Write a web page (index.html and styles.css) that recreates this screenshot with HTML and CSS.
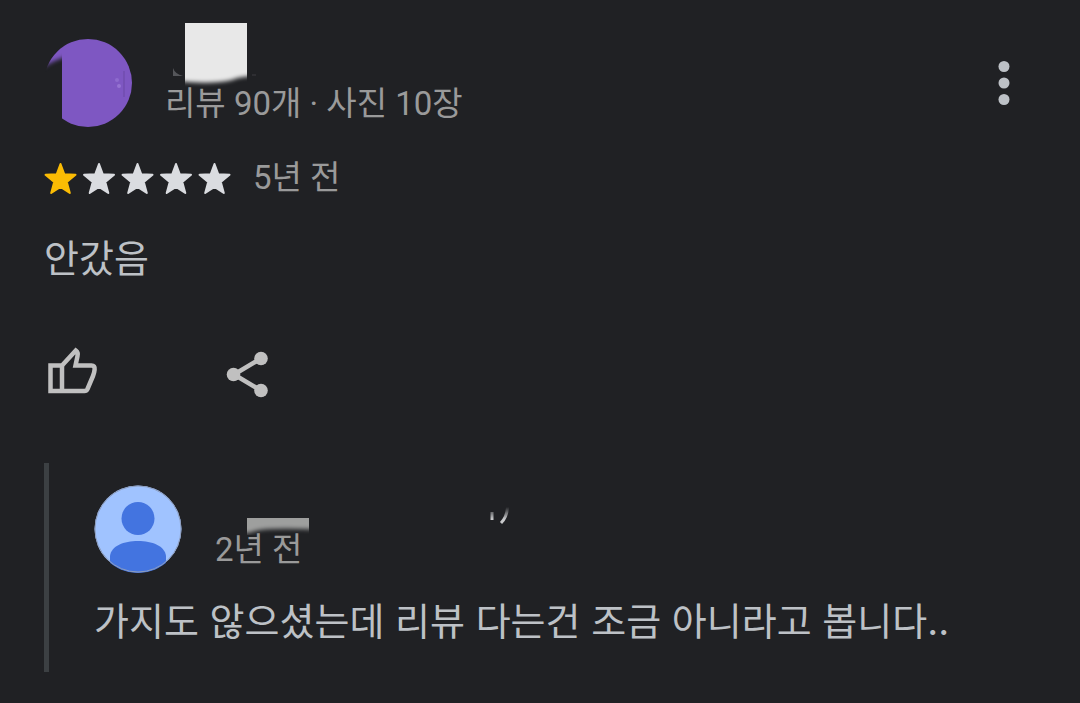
FILE: index.html
```html
<!DOCTYPE html>
<html lang="ko">
<head>
    <meta charset="UTF-8">
    <meta name="viewport" content="width=device-width, initial-scale=1.0">
    <title>리뷰</title>
    <link rel="stylesheet" href="styles.css">
</head>
<body>
    <article class="review">
        <header class="review-header">
            <svg class="avatar" viewBox="0 0 88 88" aria-hidden="true">
                <defs>
                    <filter id="soft" x="-20%" y="-20%" width="140%" height="140%"><feGaussianBlur stdDeviation="2"/></filter>
                    <clipPath id="circle"><circle cx="44" cy="44" r="44"/></clipPath>
                    <mask id="cut">
                        <path d="M0 0H88V88H0Z" fill="#fff"/>
                        <path d="M-10 34Q8 21 30 15V110H-10Z" fill="#000" filter="url(#soft)"/>
                        <path d="M18 0H88V88H18Z" fill="#fff"/>
                    </mask>
                </defs>
                <circle cx="44" cy="44" r="44" fill="#7e57c2" mask="url(#cut)"/>
                <path d="M80 32V58" stroke="#6a49a5" stroke-width="1"/>
                <circle cx="73" cy="41" r="2" fill="#8e6bce"/>
                <circle cx="75" cy="47" r="2" fill="#9674d2"/>
            </svg>
            <div class="author">
                <svg class="author-name" viewBox="0 0 100 63" aria-hidden="true">
                    <defs><clipPath id="name"><path d="M19 0H81V66H19Z"/></clipPath></defs>
                    <g clip-path="url(#name)" transform="translate(1 0)">
                        <path d="M10-10H90V53Q76 53 66 57Q45 62 10 58Z" fill="#e8e8e8" filter="url(#soft)"/>
                    </g>
                    <path d="M8 45Q10 51 18 53H8Z" fill="#55565a"/>
                    <path d="M87 52H91" stroke="#3c3d40" stroke-width="1"/>
                </svg>
                <span class="meta">리뷰 90개 · 사진 10장</span>
            </div>
            <button class="icon-button more" type="button" aria-label="더보기">
                <svg width="12" height="46" viewBox="0 0 12 46" fill="#bdc1c6">
                    <circle cx="6" cy="6.500" r="5.500"/>
                    <circle cx="6" cy="23" r="5.500"/>
                    <circle cx="6" cy="39.500" r="5.500"/>
                </svg>
            </button>
        </header>

        <div class="rating">
            <svg class="stars" viewBox="0 0 187 34" role="img" aria-label="별점 1점">
                <defs>
                    <path id="star" d="M16.500 3L20.300 13.300L31.500 13.800L22.800 21L25.800 32L16.500 26L7.200 32L10.200 21L1.500 13.800L12.700 13.300Z" stroke-width="2" stroke-linejoin="round"/>
                </defs>
                <use href="#star" fill="#fbbc04" stroke="#fbbc04"/>
                <g fill="#dadce0" stroke="#dadce0">
                    <use href="#star" x="38.500"/>
                    <use href="#star" x="77"/>
                    <use href="#star" x="115.500"/>
                    <use href="#star" x="154"/>
                </g>
            </svg>
            <span class="meta">5년 전</span>
        </div>

        <p class="text">안갔음</p>

        <div class="actions">
            <button class="icon-button" type="button" aria-label="좋아요">
                <svg width="56" height="52" viewBox="0 0 56 52" fill="none" stroke="#c0c0c0" stroke-width="4.500">
                    <path d="M6.500 19.500H18L31.800 4.500Q34.500 6.500 33.500 10L31.500 19.500H47.500Q51 19.500 50.600 23.500Q50.300 27 49 30L43.500 43Q42.500 45 40.500 45H6.500Z"/>
                    <path d="M18 19.500V45"/>
                </svg>
            </button>
            <button class="icon-button" type="button" aria-label="공유">
                <svg width="44" height="52" viewBox="0 0 44 52" fill="#c0c0c0">
                    <path d="M35 12.500L8 28.500L35 44.500" fill="none" stroke="#c0c0c0" stroke-width="4.500"/>
                    <circle cx="35" cy="12.500" r="6.800"/>
                    <circle cx="7.500" cy="28.500" r="6.800"/>
                    <circle cx="35" cy="44.500" r="6.800"/>
                </svg>
            </button>
        </div>

        <section class="reply">
            <div class="reply-header">
                <svg class="avatar" viewBox="0 0 88 88" aria-hidden="true">
                    <circle cx="44" cy="44" r="43.500" fill="#a0c3ff"/>
                    <g clip-path="url(#circle)" fill="#4374e0">
                        <circle cx="44" cy="33.500" r="16.500"/>
                        <path d="M16 90V71C17 61 30 56 44 56S71 61 72 71V90Z"/>
                    </g>
                    <circle cx="44" cy="44" r="43" fill="none" stroke="#8d9dbd" stroke-width="1"/>
                </svg>
                <div class="author">
                    <svg class="reply-name" viewBox="0 0 300 47" aria-hidden="true">
                        <defs>
                            <clipPath id="reply-name"><path d="M32 33H94V50H32Z"/></clipPath>
                            <linearGradient id="fade" gradientUnits="userSpaceOnUse" x1="0" y1="22" x2="0" y2="34">
                                <stop offset="0" stop-color="#202124"/>
                                <stop offset="1" stop-color="#c8c9cb"/>
                            </linearGradient>
                        </defs>
                        <g clip-path="url(#reply-name)">
                            <path d="M20 20H104V45Q76 43 58 44Q44 44 34 48H20Z" fill="#9e9f9e" filter="url(#soft)"/>
                        </g>
                        <path d="M277 27V35" stroke="url(#fade)" stroke-width="3"/>
                        <path d="M292.500 22Q292 32 286 38" fill="none" stroke="url(#fade)" stroke-width="3"/>
                    </svg>
                    <span class="meta">2년 전</span>
                </div>
            </div>
            <p class="text">가지도 않으셨는데 리뷰 다는건 조금 아니라고 봅니다..</p>
        </section>
    </article>
</body>
</html>
```
FILE: styles.css
```css
body {
    margin: 0;
    background-color: #202124;
    color: #bdc1c6;
    font-family: Roboto, "Noto Sans CJK KR", sans-serif;
}

.review {
    padding: 23px 44px 32px;
}

.review-header {
    display: flex;
    align-items: flex-end;
}

.avatar {
    flex: none;
    width: 88px;
    height: 88px;
}

.author {
    display: flex;
    flex-direction: column;
    align-self: flex-start;
    margin-left: 33px;
}

.review-header .author {
    height: 104px;
}

.author-name {
    width: 100px;
    height: 63px;
    overflow: visible;
}

.reply-name {
    width: 300px;
    height: 47px;
    overflow: visible;
}

.meta {
    color: #9a9a9a;
    font-size: 33px;
    line-height: 36px;
}

.icon-button {
    display: flex;
    align-items: center;
    justify-content: center;
    padding: 0;
    border: none;
    background: none;
    cursor: pointer;
}

.more {
    width: 64px;
    height: 88px;
    margin-left: auto;
}

.rating {
    display: flex;
    align-items: center;
    gap: 22px;
    margin-top: 33px;
}

.stars {
    width: 187px;
    height: 34px;
}

.text {
    margin: 0;
    font-family: Inter, "Noto Sans CJK KR", sans-serif;
    font-size: 38px;
    line-height: 48px;
}

.rating + .text {
    margin-top: 38px;
}

.actions {
    display: flex;
    gap: 126px;
    margin-top: 64px;
}

.reply {
    margin-top: 65px;
    padding: 22px 0 27px 45px;
    border-left: 5px solid #3c4043;
}

.reply-header {
    display: flex;
    margin-bottom: 24px;
}
```
